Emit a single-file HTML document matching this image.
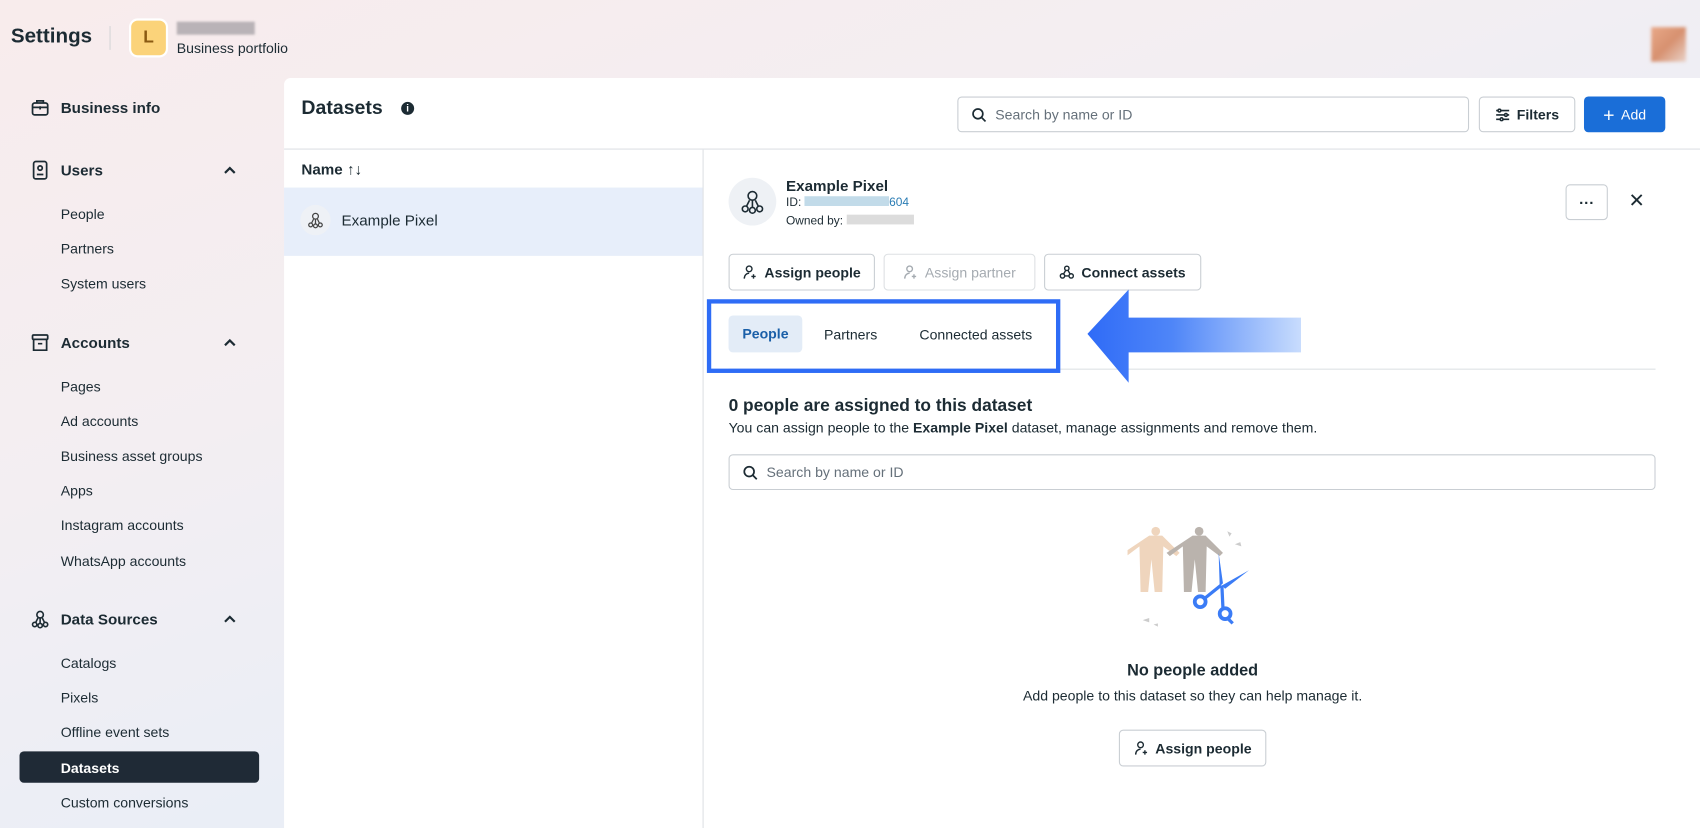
<!DOCTYPE html>
<html><head><meta charset="utf-8"><style>
*{box-sizing:border-box;margin:0;padding:0}
html,body{width:1700px;height:828px;overflow:hidden}
body{font-family:"Liberation Sans",sans-serif;color:#1c2b33}
#w{position:absolute;left:0;top:0;width:1568px;height:764px;transform:scale(1.08418);transform-origin:0 0;background:linear-gradient(160deg,#f8ecec 0%,#f3eef2 35%,#e6eef8 75%,#e2ecf7 100%);overflow:hidden}
.a{position:absolute;white-space:nowrap}
.b{font-weight:bold}
.nav{font-size:13px;left:56px}
.sec{font-size:14px;font-weight:bold;left:56px}
.btn{position:absolute;border:1px solid #c9ced3;border-radius:4px;background:#fff;font-size:13px;font-weight:bold;display:flex;align-items:center;justify-content:center;gap:6px}
.srch{position:absolute;border:1px solid #c9ced3;border-radius:4px;background:#fff;font-size:13px;color:#65707a;display:flex;align-items:center;padding-left:12px;gap:8px}
</style></head><body><div id="w">
<div class="a b" style="left:10px;top:23px;font-size:19px">Settings</div>
<div class="a" style="left:101px;top:24px;width:1px;height:22px;background:#d5d5d8"></div>
<div class="a" style="left:119px;top:17px;width:36px;height:36px;background:#fbd37a;border-radius:8px;border:2px solid #fff;font-weight:bold;color:#8a5a12;font-size:16px;text-align:center;line-height:32px">L</div>
<div class="a" style="left:163px;top:20px;width:72px;height:12px;background:#b9b3b7;filter:blur(1px)"></div>
<div class="a" style="left:163px;top:37px;font-size:13px">Business portfolio</div>
<div class="a" style="left:1523px;top:25px;width:32px;height:32px;background:linear-gradient(135deg,#e8a888,#d79170 50%,#e9d2c8);filter:blur(1.5px)"></div>

<svg class="a" style="left:28px;top:90px" width="18" height="18" viewBox="0 0 18 18" fill="none" stroke="#1c2b33" stroke-width="1.6"><rect x="2" y="5" width="14" height="11" rx="2"/><path d="M6 5V3h6v2M2 9h14M9 8v3"/></svg>
<div class="a sec" style="top:91px">Business info</div>
<svg class="a" style="left:29px;top:148px" width="16" height="18" viewBox="0 0 16 18" fill="none" stroke="#1c2b33" stroke-width="1.6"><rect x="2" y="1" width="12" height="16" rx="2"/><circle cx="8" cy="7" r="2"/><path d="M5 13h6"/></svg>
<div class="a sec" style="top:149px">Users</div>
<svg class="a" style="left:206px;top:153px" width="12" height="8" viewBox="0 0 12 8" fill="none" stroke="#1c2b33" stroke-width="2"><path d="M1.5 6.5L6 2l4.5 4.5"/></svg>
<div class="a nav" style="top:190px">People</div>
<div class="a nav" style="top:222px">Partners</div>
<div class="a nav" style="top:254px">System users</div>
<svg class="a" style="left:28px;top:307px" width="18" height="18" viewBox="0 0 18 18" fill="none" stroke="#1c2b33" stroke-width="1.6"><rect x="2" y="2" width="14" height="4" rx="1"/><path d="M3 6v10h12V6M7 10h4"/></svg>
<div class="a sec" style="top:308px">Accounts</div>
<svg class="a" style="left:206px;top:312px" width="12" height="8" viewBox="0 0 12 8" fill="none" stroke="#1c2b33" stroke-width="2"><path d="M1.5 6.5L6 2l4.5 4.5"/></svg>
<div class="a nav" style="top:349px">Pages</div>
<div class="a nav" style="top:381px">Ad accounts</div>
<div class="a nav" style="top:413px">Business asset groups</div>
<div class="a nav" style="top:445px">Apps</div>
<div class="a nav" style="top:477px">Instagram accounts</div>
<div class="a nav" style="top:510px">WhatsApp accounts</div>
<svg class="a" style="left:28px;top:562px" width="18" height="18" viewBox="0 0 18 18" fill="none" stroke="#1c2b33" stroke-width="1.5"><circle cx="9" cy="5" r="3"/><circle cx="4" cy="14" r="2"/><circle cx="9" cy="15" r="2"/><circle cx="14" cy="14" r="2"/><path d="M9 8v5M7 8l-2 4M11 8l2 4"/></svg>
<div class="a sec" style="top:563px">Data Sources</div>
<svg class="a" style="left:206px;top:567px" width="12" height="8" viewBox="0 0 12 8" fill="none" stroke="#1c2b33" stroke-width="2"><path d="M1.5 6.5L6 2l4.5 4.5"/></svg>
<div class="a nav" style="top:604px">Catalogs</div>
<div class="a nav" style="top:636px">Pixels</div>
<div class="a nav" style="top:668px">Offline event sets</div>
<div class="a" style="left:18px;top:693px;width:221px;height:29px;background:#1f2a36;border-radius:4px"></div>
<div class="a nav b" style="top:701px;color:#fff">Datasets</div>
<div class="a nav" style="top:733px">Custom conversions</div>

<div class="a" style="left:262px;top:72px;width:1306px;height:700px;background:#fff;border-radius:6px 0 0 0"></div>
<div class="a b" style="left:278px;top:89px;font-size:18px">Datasets</div>
<div class="a" style="left:370px;top:94px;width:12px;height:12px;border-radius:50%;background:#1c2b33;color:#fff;font-size:9px;font-weight:bold;text-align:center;line-height:12px">i</div>
<div class="srch" style="left:883px;top:89px;width:472px;height:33px"><svg width="14" height="14" viewBox="0 0 14 14" fill="none" stroke="#1c2b33" stroke-width="1.6"><circle cx="6" cy="6" r="4.5"/><path d="M9.5 9.5L13 13"/></svg>Search by name or ID</div>
<div class="btn" style="left:1364px;top:89px;width:89px;height:33px"><svg width="14" height="12" viewBox="0 0 14 12" stroke="#1c2b33" stroke-width="1.5"><path d="M1 2h12M1 6h12M1 10h12"/><circle cx="4" cy="2" r="1.3" fill="#fff"/><circle cx="10" cy="6" r="1.3" fill="#fff"/><circle cx="6" cy="10" r="1.3" fill="#fff"/></svg>Filters</div>
<div class="btn" style="left:1461px;top:89px;width:75px;height:33px;background:#1a6ed8;border-color:#1a6ed8;color:#fff;font-weight:normal"><span style="font-size:18px;line-height:1">+</span> Add</div>
<div class="a" style="left:262px;top:137px;width:1306px;height:1px;background:#dde1e5"></div>
<div class="a b" style="left:278px;top:148px;font-size:14px">Name <span style="font-weight:normal">↑↓</span></div>
<div class="a" style="left:262px;top:173px;width:386px;height:63px;background:#e7eefa"></div>
<div class="a" style="left:277px;top:189px;width:28px;height:28px;border-radius:50%;background:#eef1f6"></div>
<svg class="a" style="left:283px;top:195px" width="16" height="16" viewBox="0 0 18 18" fill="none" stroke="#444" stroke-width="1.3"><circle cx="9" cy="5" r="3"/><circle cx="4" cy="14" r="2"/><circle cx="9" cy="15" r="2"/><circle cx="14" cy="14" r="2"/><path d="M9 8v5M7 8l-2 4M11 8l2 4"/></svg>
<div class="a" style="left:315px;top:195px;font-size:14px">Example Pixel</div>
<div class="a" style="left:648px;top:138px;width:1px;height:626px;background:#dde1e5"></div>

<div class="a" style="left:672px;top:164px;width:44px;height:44px;border-radius:50%;background:#eef1f5"></div>
<svg class="a" style="left:682px;top:174px" width="24" height="24" viewBox="0 0 18 18" fill="none" stroke="#1c2b33" stroke-width="1.1"><circle cx="9" cy="5" r="3"/><circle cx="4" cy="14" r="2"/><circle cx="9" cy="15" r="2"/><circle cx="14" cy="14" r="2"/><path d="M9 8v5M7 8l-2 4M11 8l2 4"/></svg>
<div class="a b" style="left:725px;top:163px;font-size:14px">Example Pixel</div>
<div class="a" style="left:725px;top:181px;font-size:11px">ID: <span style="display:inline-block;width:78px;height:9px;background:#c2dbe9"></span><span style="color:#2a7cb4">604</span></div>
<div class="a" style="left:725px;top:198px;font-size:11px">Owned by: <span style="display:inline-block;width:62px;height:9px;background:#dcdcdc"></span></div>
<div class="btn" style="left:1444px;top:170px;width:39px;height:33px;font-size:14px">···</div>
<div class="a" style="left:1502px;top:175px;font-size:18px">✕</div>

<div class="btn" style="left:672px;top:234px;width:135px;height:34px"><svg width="14" height="14" viewBox="0 0 14 14" fill="none" stroke="#1c2b33" stroke-width="1.3"><circle cx="6" cy="4" r="2.6"/><path d="M1.5 13c0-3 2-5 4.5-5M10 9v4M8 11h4"/></svg>Assign people</div>
<div class="btn" style="left:815px;top:234px;width:140px;height:34px;color:#a5abb1;border-color:#dde0e3;font-weight:normal"><svg width="14" height="14" viewBox="0 0 14 14" fill="none" stroke="#a5abb1" stroke-width="1.3"><circle cx="6" cy="4" r="2.6"/><path d="M1.5 13c0-3 2-5 4.5-5M10 9v4M8 11h4"/></svg>Assign partner</div>
<div class="btn" style="left:963px;top:234px;width:145px;height:34px"><svg width="14" height="14" viewBox="0 0 14 14" fill="none" stroke="#1c2b33" stroke-width="1.3"><circle cx="7" cy="3.5" r="2"/><circle cx="3" cy="10.5" r="2"/><circle cx="11" cy="10.5" r="2"/><path d="M6 5.3L4 8.7M8 5.3l2 3.4M5 10.5h4"/></svg>Connect assets</div>

<div class="a" style="left:672px;top:340px;width:855px;height:1px;background:#dde1e5"></div>
<div class="a" style="left:652px;top:276px;width:326px;height:68px;border:4px solid #2e6cf6"></div>
<div class="a b" style="left:672px;top:291px;width:68px;height:34px;background:#e3ecf7;border-radius:4px;color:#1a5fa8;font-size:13px;text-align:center;line-height:34px">People</div>
<div class="a" style="left:760px;top:301px;font-size:13px">Partners</div>
<div class="a" style="left:848px;top:301px;font-size:13px">Connected assets</div>
<svg class="a" style="left:1000px;top:264px" width="205" height="92"><defs><linearGradient id="g" x1="0" x2="1"><stop offset="0" stop-color="#2f6bf7"/><stop offset=".4" stop-color="#4f86f8"/><stop offset="1" stop-color="#c8dcfd"/></linearGradient></defs><path d="M3 44L41 3V29H200V61H41V89Z" fill="url(#g)"/></svg>

<div class="a b" style="left:672px;top:366px;font-size:16px">0 people are assigned to this dataset</div>
<div class="a" style="left:672px;top:387px;font-size:13px">You can assign people to the <b>Example Pixel</b> dataset, manage assignments and remove them.</div>
<div class="srch" style="left:672px;top:419px;width:855px;height:33px"><svg width="14" height="14" viewBox="0 0 14 14" fill="none" stroke="#1c2b33" stroke-width="1.6"><circle cx="6" cy="6" r="4.5"/><path d="M9.5 9.5L13 13"/></svg>Search by name or ID</div>

<svg class="a" style="left:1040px;top:480px" width="120" height="100" viewBox="0 0 120 100">
<g fill="#efd5bd"><circle cx="26" cy="10" r="4"/><path d="M20 14h12l16 16-3 3-12-9-1 42h-7l-3-30-3 30h-7l-1-42-12 9-3-3z"/></g>
<g fill="#bab3ad"><circle cx="66" cy="10" r="4"/><path d="M60 14h12l16 16-3 3-12-9-1 42h-7l-3-30-3 30h-7l-1-42-12 9-3-3z"/></g>
<path d="M84 30l4 28-3 3zM112 46l-22 17-3-3z" fill="#3b7cf6"/>
<circle cx="67" cy="75" r="5" fill="none" stroke="#3b7cf6" stroke-width="3.5"/><circle cx="90" cy="86" r="5" fill="none" stroke="#3b7cf6" stroke-width="3.5"/>
<path d="M71 72l15-12M88 81l-1-21M93 91l4 4" stroke="#3b7cf6" stroke-width="3"/>
<path d="M92 10l4 2-2 3zM99 22l5-2 1 4zM14 92l6-2v4zM24 96l4-1v3z" fill="#ccc"/>
</svg>
<div class="a b" style="left:1000px;top:610px;width:200px;text-align:center;font-size:15px">No people added</div>
<div class="a" style="left:900px;top:634px;width:400px;text-align:center;font-size:13px">Add people to this dataset so they can help manage it.</div>
<div class="btn" style="left:1032px;top:673px;width:136px;height:34px"><svg width="14" height="14" viewBox="0 0 14 14" fill="none" stroke="#1c2b33" stroke-width="1.3"><circle cx="6" cy="4" r="2.6"/><path d="M1.5 13c0-3 2-5 4.5-5M10 9v4M8 11h4"/></svg>Assign people</div>
</div></body></html>
